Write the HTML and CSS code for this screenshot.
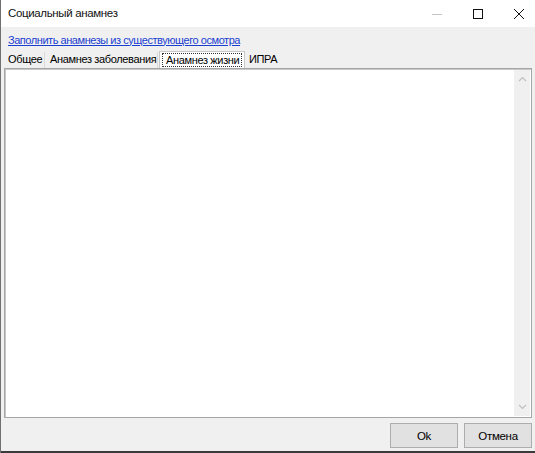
FILE: index.html
```html
<!DOCTYPE html>
<html lang="ru">
<head>
<meta charset="utf-8">
<title>Социальный анамнез</title>
<link rel="stylesheet" href="styles.css">
</head>
<body>
<div class="window">
  <div class="titlebar">
    <div class="title">Социальный анамнез</div>
    <div class="controls">
      <span class="ctl">
        <svg width="12" height="12" viewBox="0 0 12 12"><path d="M1 6.5H11" stroke="#c4c4c4" stroke-width="1"/></svg>
      </span>
      <span class="ctl">
        <svg width="12" height="12" viewBox="0 0 12 12"><rect x="1.5" y="1.5" width="9" height="9" fill="none" stroke="#111" stroke-width="1"/></svg>
      </span>
      <span class="ctl">
        <svg width="12" height="12" viewBox="0 0 12 12"><path d="M1 1L11 11M11 1L1 11" stroke="#111" stroke-width="1"/></svg>
      </span>
    </div>
  </div>
  <div class="content">
    <div class="linkrow"><a class="link" href="#">Заполнить анамнезы из существующего осмотра</a></div>
    <div class="tabs">
      <div class="tab t1">Общее</div>
      <div class="tab t2">Анамнез заболевания</div>
      <div class="tab active"><span class="focus">Анамнез жизни</span></div>
      <div class="tab t4">ИПРА</div>
    </div>
    <div class="panel">
      <div class="textarea"></div>
      <div class="scrollbar">
        <svg class="arrow" width="9" height="6" viewBox="0 0 9 6"><path d="M1 5L4.5 1.5L8 5" fill="none" stroke="#c0c0c0" stroke-width="1.2"/></svg>
        <svg class="arrow" width="9" height="6" viewBox="0 0 9 6"><path d="M1 1L4.5 4.5L8 1" fill="none" stroke="#c0c0c0" stroke-width="1.2"/></svg>
      </div>
    </div>
    <div class="footer">
      <button class="btn">Ok</button>
      <button class="btn">Отмена</button>
    </div>
  </div>
  <div class="behind"></div>
</div>
</body>
</html>
```
FILE: styles.css
```css
html, body {
  margin: 0;
  padding: 0;
}
body {
  width: 535px;
  height: 453px;
  overflow: hidden;
  font-family: "Liberation Sans", "DejaVu Sans", sans-serif;
  font-size: 11px;
  letter-spacing: -0.35px;
  color: #000;
  background: #f0f0f0;
}
.window {
  width: 535px;
  height: 453px;
  display: flex;
  flex-direction: column;
  border-left: 1px solid #707070;
  box-sizing: border-box;
}
.titlebar {
  height: 27px;
  background: #fff;
  display: flex;
  align-items: center;
  justify-content: space-between;
  flex: none;
}
.title {
  padding-left: 7px;
  padding-bottom: 1px;
  font-size: 11.5px;
  color: #111;
}
.controls {
  display: flex;
  align-items: center;
  padding-right: 10px;
  gap: 29px;
}
.ctl {
  display: flex;
  width: 12px;
  height: 12px;
}
.content {
  flex: 1;
  display: flex;
  flex-direction: column;
  background: #f0f0f0;
}
.linkrow {
  height: 24px;
  display: flex;
  align-items: center;
  padding-left: 7px;
  padding-top: 1px;
  box-sizing: border-box;
}
.link {
  color: #1a3fd0;
  text-decoration: underline;
  letter-spacing: -0.45px;
}
.tabs {
  display: flex;
  align-items: flex-end;
  height: 17px;
  padding-left: 3px;
}
.tab {
  height: 16px;
  line-height: 15px;
  box-sizing: border-box;
  padding: 0 4px;
  border-right: 1px solid #dadada;
  white-space: nowrap;
}
.t1 { width: 41px; padding-left: 4px; }
.t2 { width: 113px; padding-left: 5px; }
.t4 { width: 37px; border-right: none; padding-left: 3px; }
.tab.active {
  height: 17px;
  width: 86px;
  background: #fff;
  border: 1px solid #c8c8c8;
  border-bottom: none;
  padding: 1px 2px 0;
  margin: 0 1px;
}
.focus {
  display: block;
  height: 14px;
  line-height: 13px;
  border: 1px dotted #333;
  padding: 0 3px;
  box-sizing: border-box;
}
.panel {
  height: 350px;
  margin: 0 3px 0 3px;
  border: 1px solid #a6a6a6;
  box-shadow: inset 1px 1px 0 #c8c8c8;
  background: #fff;
  display: flex;
  box-sizing: border-box;
  padding: 1px;
}
.textarea {
  flex: 1;
  background: #fff;
}
.scrollbar {
  width: 16px;
  background: #f0f0f0;
  display: flex;
  flex-direction: column;
  justify-content: space-between;
  align-items: center;
  padding: 6px 0 6px;
  box-sizing: border-box;
}
.arrow {
  display: block;
}
.footer {
  flex: 1;
  display: flex;
  justify-content: flex-end;
  align-items: flex-start;
  gap: 6px;
  padding: 5px 3px 0 0;
}
.btn {
  width: 68px;
  height: 25px;
  font-family: inherit;
  font-size: 11.5px;
  letter-spacing: -0.3px;
  color: #000;
  background: #e1e1e1;
  border: 1px solid #adadad;
  border-radius: 0;
  padding: 0;
}
.behind {
  height: 2px;
  background: #3a3a3a;
  flex: none;
}
```
